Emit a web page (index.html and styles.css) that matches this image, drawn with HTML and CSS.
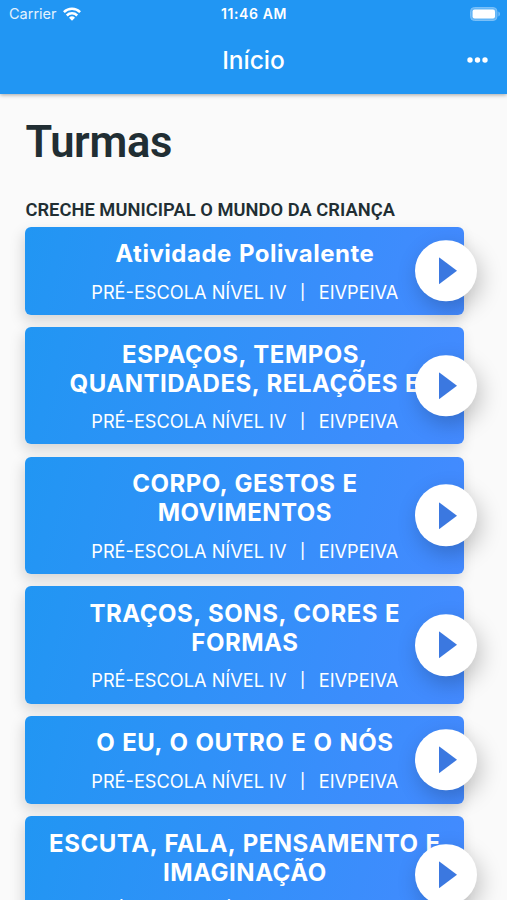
FILE: index.html
```html
<!DOCTYPE html>
<html lang="pt-BR">
  <head>
    <meta charset="UTF-8" />
    <meta name="viewport" content="width=device-width, initial-scale=1.0" />
    <title>Início</title>
    <link rel="stylesheet" href="styles.css">
  </head>
  <body>
    <header class="app-bar">
      <div class="status-bar">
        <div class="carrier">
          <span>Carrier</span>
          <svg class="wifi" viewBox="0 0 18 14" fill="none" stroke="#fff" stroke-width="2.5">
            <path d="M0.9 5.1a11.6 11.6 0 0 1 16.2 0"></path>
            <path d="M3.8 8.5a7.4 7.4 0 0 1 10.4 0"></path>
            <path d="M9 13.8L6 10.8a4.3 4.3 0 0 1 6 0z" fill="#fff" stroke="none"></path>
          </svg>
        </div>
        <span class="clock">11:46 AM</span>
        <svg class="battery" viewBox="0 0 31 14">
          <rect x="0.5" y="0.5" width="26.5" height="13" rx="4" fill="#64b6f7" stroke="#7ac0f8"></rect>
          <rect x="2.6" y="2.6" width="22.4" height="8.8" rx="2" fill="#fff"></rect>
          <path d="M28.4 4.6a2.6 2.6 0 0 1 0 4.8z" fill="#7ac0f8"></path>
        </svg>
      </div>
      <div class="toolbar">
        <h1 class="toolbar-title">Início</h1>
        <svg class="more" viewBox="0 0 21 6" fill="#fff">
          <circle cx="3" cy="3" r="2.7"></circle>
          <circle cx="10.5" cy="3" r="2.7"></circle>
          <circle cx="18" cy="3" r="2.7"></circle>
        </svg>
      </div>
    </header>

    <main class="content">
      <h2 class="page-title">Turmas</h2>
      <h3 class="school">CRECHE MUNICIPAL O MUNDO DA CRIANÇA</h3>

      <div class="class-list">
        <div class="card">
          <div class="card-title">Atividade Polivalente</div>
          <div class="card-info"><span>PRÉ-ESCOLA NÍVEL IV</span><span class="divider">|</span><span>EIVPEIVA</span></div>
          <button class="play"><svg viewBox="0 0 18 27"><path d="M0 0L18 13.5L0 27z"></path></svg></button>
        </div>
        <div class="card">
          <div class="card-title">ESPAÇOS, TEMPOS,<br>QUANTIDADES, RELAÇÕES E</div>
          <div class="card-info"><span>PRÉ-ESCOLA NÍVEL IV</span><span class="divider">|</span><span>EIVPEIVA</span></div>
          <button class="play"><svg viewBox="0 0 18 27"><path d="M0 0L18 13.5L0 27z"></path></svg></button>
        </div>
        <div class="card">
          <div class="card-title">CORPO, GESTOS E<br>MOVIMENTOS</div>
          <div class="card-info"><span>PRÉ-ESCOLA NÍVEL IV</span><span class="divider">|</span><span>EIVPEIVA</span></div>
          <button class="play"><svg viewBox="0 0 18 27"><path d="M0 0L18 13.5L0 27z"></path></svg></button>
        </div>
        <div class="card">
          <div class="card-title">TRAÇOS, SONS, CORES E<br>FORMAS</div>
          <div class="card-info"><span>PRÉ-ESCOLA NÍVEL IV</span><span class="divider">|</span><span>EIVPEIVA</span></div>
          <button class="play"><svg viewBox="0 0 18 27"><path d="M0 0L18 13.5L0 27z"></path></svg></button>
        </div>
        <div class="card">
          <div class="card-title">O EU, O OUTRO E O NÓS</div>
          <div class="card-info"><span>PRÉ-ESCOLA NÍVEL IV</span><span class="divider">|</span><span>EIVPEIVA</span></div>
          <button class="play"><svg viewBox="0 0 18 27"><path d="M0 0L18 13.5L0 27z"></path></svg></button>
        </div>
        <div class="card">
          <div class="card-title">ESCUTA, FALA, PENSAMENTO E<br>IMAGINAÇÃO</div>
          <div class="card-info"><span>PRÉ-ESCOLA NÍVEL IV</span><span class="divider">|</span><span>EIVPEIVA</span></div>
          <button class="play"><svg viewBox="0 0 18 27"><path d="M0 0L18 13.5L0 27z"></path></svg></button>
        </div>
      </div>
    </main>
  </body>
</html>
```

FILE: styles.css
```css
* {
  box-sizing: border-box;
}

body {
  margin: 0;
  height: 900px;
  overflow: hidden;
  background-color: #fafafa;
  color: #212e33;
  font-family: Inter, "Liberation Sans", sans-serif;
}

.app-bar {
  position: relative;
  height: 94px;
  background-color: #2196f3;
  color: #fff;
  box-shadow: 0 1px 4px rgba(0, 0, 0, 0.35);
}

.status-bar {
  display: grid;
  grid-template-columns: 1fr auto 1fr;
  align-items: center;
  height: 27px;
  padding: 0 6px 0 9px;
  font-size: 14.5px;
}

.carrier {
  display: flex;
  align-items: center;
  gap: 6px;
  color: #e3f2fd;
}

.wifi {
  width: 18px;
  height: 14px;
}

.clock {
  margin-right: 2px;
  font-size: 14px;
  font-weight: 600;
  letter-spacing: 0.6px;
}

.battery {
  justify-self: end;
  width: 31px;
  height: 14px;
}

.toolbar {
  display: grid;
  grid-template-columns: 1fr auto 1fr;
  align-items: center;
  height: 66px;
  padding: 0 19px;
}

.toolbar-title {
  grid-column: 2;
  margin: 0;
  font-size: 24.5px;
  font-weight: 500;
}

.more {
  justify-self: end;
  width: 21px;
  height: 6px;
}

.content {
  padding: 23px 42.7px 0 25.4px;
}

.page-title {
  margin: 0;
  font-family: Roboto, sans-serif;
  font-size: 43.5px;
  line-height: 52px;
  font-weight: 600;
  letter-spacing: -0.3px;
}

.school {
  margin: 29px 0 6px;
  font-family: Roboto, sans-serif;
  font-size: 18.3px;
  line-height: 23px;
  font-weight: 600;
  letter-spacing: 0.05px;
}

.class-list {
  display: flex;
  flex-direction: column;
  gap: 12.4px;
}

.card {
  position: relative;
  padding: 12.3px 0 12.3px;
  border-radius: 6px;
  background: linear-gradient(105deg, #2196f3 0%, #448aff 100%);
  box-shadow: -2px 6px 14px rgba(0, 0, 0, 0.15);
  color: #fff;
  text-align: center;
  white-space: nowrap;
}

.card-title {
  font-size: 24px;
  line-height: 29.3px;
  font-weight: 700;
  letter-spacing: 0.52px;
  word-spacing: 0.8px;
}

.card-info {
  display: flex;
  justify-content: center;
  align-items: center;
  gap: 13.5px;
  margin-top: 12px;
  font-size: 18.2px;
  line-height: 22px;
}

.divider {
  font-size: 15px;
  font-weight: 500;
}

/* floats over the right edge of the card */
.play {
  position: absolute;
  top: 50%;
  right: -12.3px;
  display: flex;
  align-items: center;
  justify-content: center;
  width: 61.5px;
  height: 61.5px;
  padding: 0 0 0 5px;
  border: none;
  border-radius: 50%;
  background-color: #fff;
  box-shadow: 4px 8px 22px rgba(0, 0, 0, 0.22);
  transform: translateY(-50%);
}

.play svg {
  width: 18px;
  height: 27px;
  fill: #3b78e0;
}
```
